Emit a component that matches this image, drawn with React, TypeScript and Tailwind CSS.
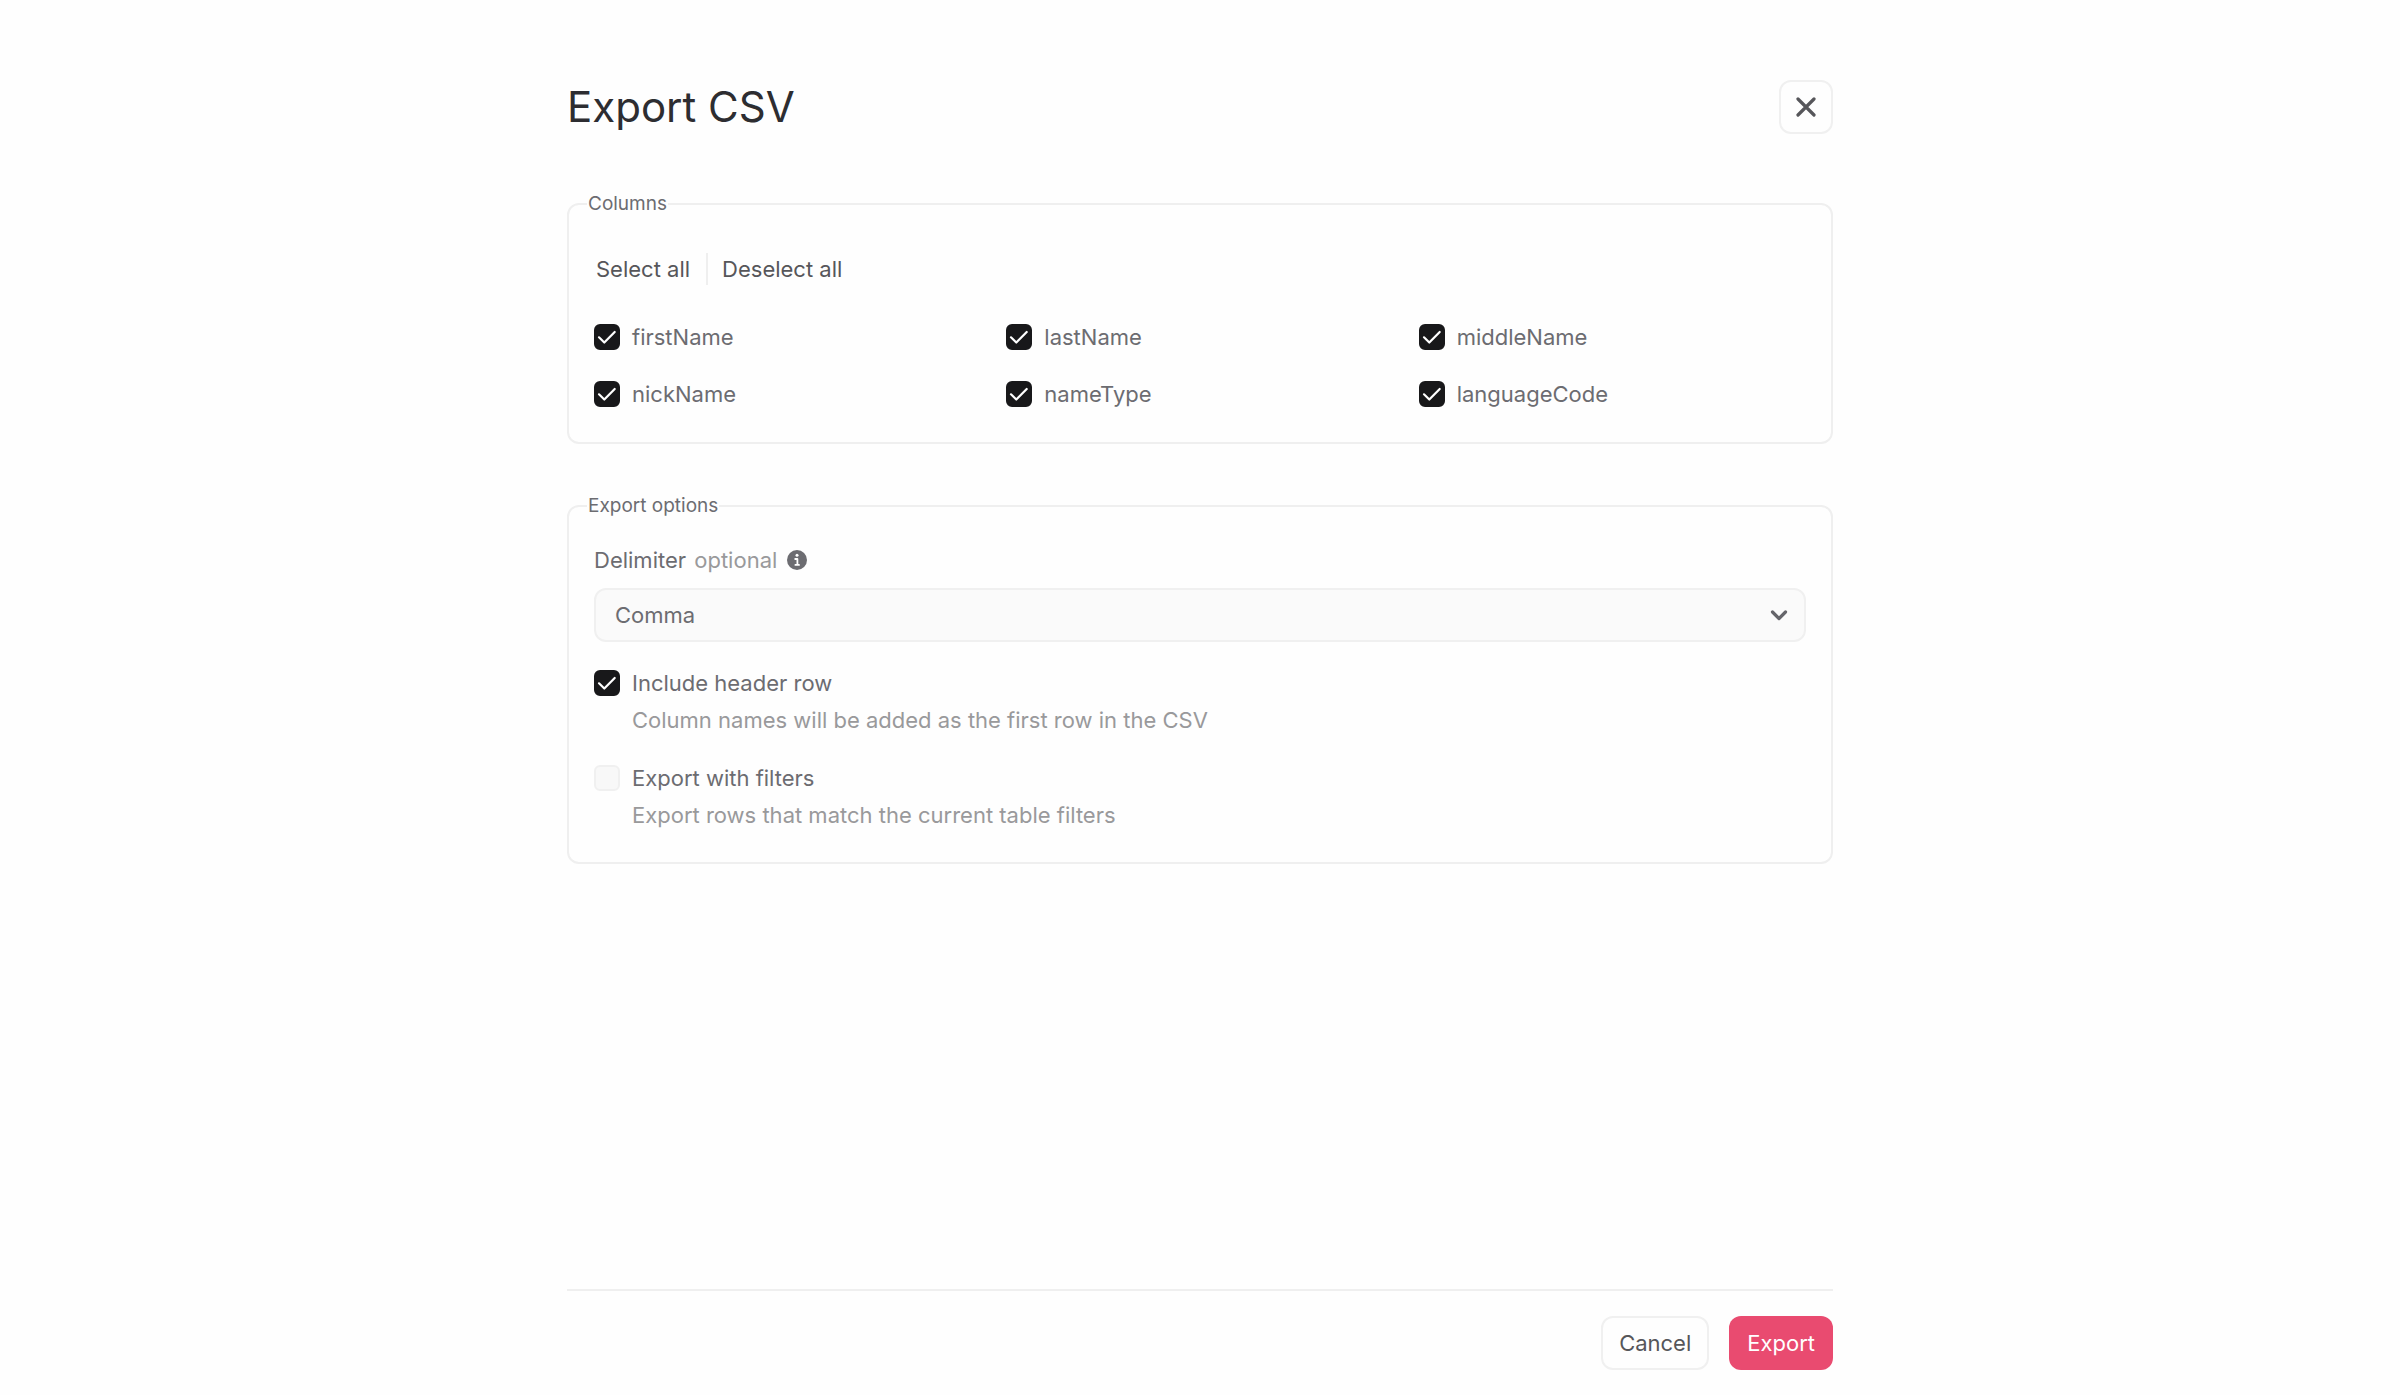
import React, { useState } from 'react';

const columns = ['firstName', 'lastName', 'middleName', 'nickName', 'nameType', 'languageCode'];

interface CheckboxProps {
  id: string;
  label: string;
  checked: boolean;
  onChange: (checked: boolean) => void;
  hint?: string;
}

const Checkbox = ({ id, label, checked, onChange, hint }: CheckboxProps) => {
  return (
    <div className="grid grid-cols-[26px_1fr] gap-x-3 gap-y-[5px]">
      <div className="grid items-center">
        <input
          id={id}
          type="checkbox"
          checked={checked}
          onChange={(e) => onChange(e.target.checked)}
          aria-describedby={hint ? `${id}-hint` : undefined}
          className="[grid-area:1/1] size-[26px] appearance-none rounded-md border-2 border-[#f0f0f0] bg-[#f8f8f8] checked:border-[#18181a] checked:bg-[#18181a]"
        />
        {checked && (
          <svg viewBox="0 0 26 26" className="pointer-events-none [grid-area:1/1] size-[26px]" fill="none" stroke="#fff" strokeWidth="2.2" strokeLinecap="round" strokeLinejoin="round">
            <path d="M5 13.3l5.3 5.2L20.7 8" />
          </svg>
        )}
      </div>
      <label htmlFor={id} className="leading-8">{label}</label>
      {hint && (
        <p id={`${id}-hint`} className="col-start-2 leading-8 text-[#99999b]">{hint}</p>
      )}
    </div>
  );
};

const App = () => {
  const [selected, setSelected] = useState<string[]>(columns);
  const [delimiter, setDelimiter] = useState('comma');
  const [includeHeader, setIncludeHeader] = useState(true);
  const [withFilters, setWithFilters] = useState(false);

  const toggleColumn = (column: string, checked: boolean) => {
    setSelected(checked ? [...selected, column] : selected.filter((c) => c !== column));
  };

  return (
    <div className="min-h-screen bg-[#fefefe] font-['Inter',sans-serif] text-[22px] text-[#6c6c71]">
      <form
        className="mx-auto flex min-h-screen w-full max-w-[1266px] flex-col pt-20"
        onSubmit={(e) => e.preventDefault()}
      >
        {/* Header */}
        <header className="flex items-center justify-between">
          <h1 className="text-[42px] leading-[54px] text-[#2d2d31]">Export CSV</h1>
          <button
            type="button"
            aria-label="Close"
            className="flex size-[54px] items-center justify-center rounded-xl border-2 border-[#f0f0f0]"
          >
            <svg viewBox="0 0 20 20" className="size-5" stroke="#56565a" strokeWidth="3.2" strokeLinecap="round">
              <path d="M2 2l16 16M18 2L2 18" />
            </svg>
          </button>
        </header>

        {/* Columns */}
        <fieldset className="mt-[58px] rounded-xl border-2 border-[#efefef] px-[18px] pb-8">
          <legend className="px-px text-[19px] leading-6">Columns</legend>
          <div className="px-[7px] pt-[37px]">
            <div className="flex items-center">
              <button type="button" className="pr-4 pl-0.5 leading-8 text-[#56565a]" onClick={() => setSelected(columns)}>
                Select all
              </button>
              <button type="button" className="border-l-2 border-[#efefef] pl-3.5 leading-8 text-[#56565a]" onClick={() => setSelected([])}>
                Deselect all
              </button>
            </div>
            <div className="mt-9 grid grid-cols-3 gap-x-[25px] gap-y-[25px]">
              {columns.map((column) => (
                <Checkbox
                  key={column}
                  id={column}
                  label={column}
                  checked={selected.includes(column)}
                  onChange={(checked) => toggleColumn(column, checked)}
                />
              ))}
            </div>
          </div>
        </fieldset>

        {/* Export options */}
        <fieldset className="mt-[50px] rounded-xl border-2 border-[#efefef] px-[18px] pb-[31px]">
          <legend className="px-px text-[19px] leading-6">Export options</legend>
          <div className="px-[7px] pt-[26px]">
            <div className="flex items-center gap-2.5">
              <label htmlFor="delimiter" className="leading-8">
                Delimiter <span className="ml-0.5 text-[#99999b]">optional</span>
              </label>
              <svg viewBox="0 0 20 20" className="size-5" aria-hidden="true">
                <circle cx="10" cy="10" r="10" fill="#6c6c71" />
                <circle cx="10" cy="5.2" r="1.5" fill="#fff" />
                <path d="M8.2 9h2.2v5.6M8.4 14.9h3.6" fill="none" stroke="#fff" strokeWidth="1.8" strokeLinecap="round" strokeLinejoin="round" />
              </svg>
            </div>
            <div className="mt-3 grid items-center">
              <select
                id="delimiter"
                value={delimiter}
                onChange={(e) => setDelimiter(e.target.value)}
                className="[grid-area:1/1] h-[54px] w-full appearance-none rounded-xl border-2 border-[#f0f0f0] bg-[#fafafa] px-[19px]"
              >
                <option value="comma">Comma</option>
                <option value="semicolon">Semicolon</option>
                <option value="tab">Tab</option>
                <option value="pipe">Pipe</option>
              </select>
              <svg viewBox="0 0 18 12" className="pointer-events-none mr-[18px] h-3 w-[18px] justify-self-end [grid-area:1/1]" fill="none" stroke="#65656a" strokeWidth="3.2" strokeLinecap="round" strokeLinejoin="round">
                <path d="M2.5 3L9 9.5 15.5 3" />
              </svg>
            </div>
            <div className="mt-[25px] flex flex-col gap-[26px]">
              <Checkbox
                id="include-header"
                label="Include header row"
                hint="Column names will be added as the first row in the CSV"
                checked={includeHeader}
                onChange={setIncludeHeader}
              />
              <Checkbox
                id="with-filters"
                label="Export with filters"
                hint="Export rows that match the current table filters"
                checked={withFilters}
                onChange={setWithFilters}
              />
            </div>
          </div>
        </fieldset>

        {/* Footer */}
        <footer className="mt-auto flex justify-end gap-5 border-t-2 border-[#efefef] py-[25px]">
          <button type="button" className="h-[54px] rounded-xl border-2 border-[#f0f0f0] px-4 text-[#56565a]">
            Cancel
          </button>
          <button type="submit" className="h-[54px] rounded-xl bg-[#e94b70] px-[18px] text-white">
            Export
          </button>
        </footer>
      </form>
    </div>
  );
};

export default App;
